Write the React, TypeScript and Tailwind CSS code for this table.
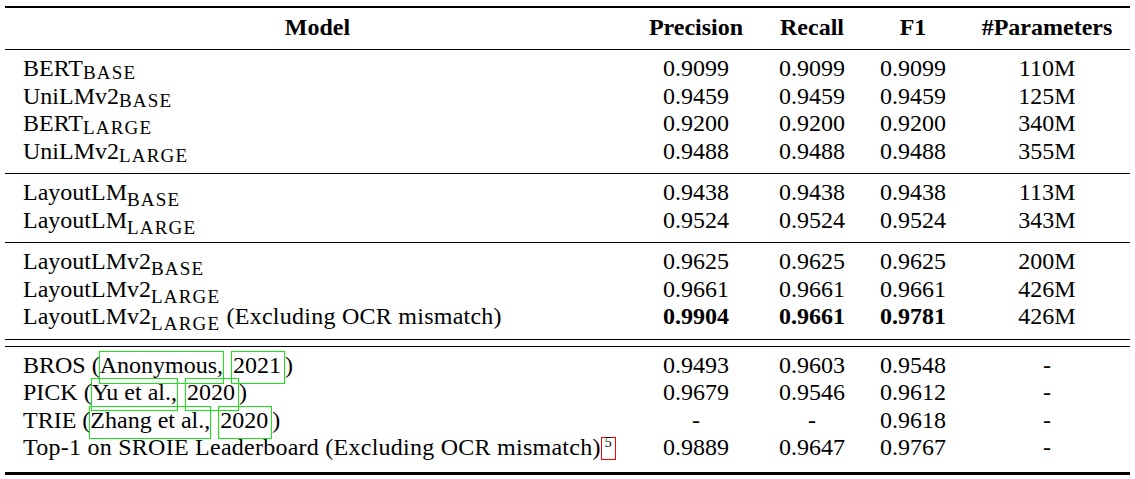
import React from "react";

type Cell = React.ReactNode;

const Sub = ({ children, lo }: { children: React.ReactNode; lo: boolean }) => (
  <span
    className={
      lo
        ? "relative top-[6px] text-[19px] leading-none tracking-[1.2px]"
        : "relative top-[3px] text-[19px] leading-none tracking-[1.2px]"
    }
  >
    {children}
  </span>
);

const Cite = ({ children }: { children: React.ReactNode }) => (
  <span className="-mx-[1px] border border-[#16e916] pt-0 pb-[5px]">{children}</span>
);

const Year = ({ children }: { children: React.ReactNode }) => (
  <span className="ml-[2px] pl-[1px] pr-[3px] border border-[#16e916] pt-0 pb-[5px]">{children}</span>
);

const Row = ({ cells }: { cells: Cell[] }) => (
  <div className="grid grid-cols-[625px_132px_100px_102px_166px] h-[27.5px]">
    <div className="pl-[18px] whitespace-nowrap">{cells[0]}</div>
    <div className="text-center">{cells[1]}</div>
    <div className="text-center">{cells[2]}</div>
    <div className="text-center">{cells[3]}</div>
    <div className="text-center">{cells[4]}</div>
  </div>
);

const B = ({ children }: { children: React.ReactNode }) => <span className="font-bold">{children}</span>;

export default function App() {
  return (
    <div
      className="w-[1135px] h-[479px] bg-white text-black pt-[6px]"
      style={{ fontFamily: '"Liberation Serif", "Times New Roman", serif' }}
    >
      <div className="ml-[5px] w-[1125px] text-[24px] leading-[27.5px]">
        {/* header */}
        <div className="border-t-2 border-b border-black h-[44px] pt-[6px] font-bold">
          <div className="grid grid-cols-[625px_132px_100px_102px_166px]">
            <div className="text-center">Model</div>
            <div className="text-center">Precision</div>
            <div className="text-center">Recall</div>
            <div className="text-center">F1</div>
            <div className="text-center">#Parameters</div>
          </div>
        </div>

        {/* block 1 */}
        <div className="border-b border-black pt-[5px] pb-[8px]">
          <Row cells={[<>BERT<Sub lo={false}>BASE</Sub></>, "0.9099", "0.9099", "0.9099", "110M"]} />
          <Row cells={[<>UniLMv2<Sub lo={false}>BASE</Sub></>, "0.9459", "0.9459", "0.9459", "125M"]} />
          <Row cells={[<>BERT<Sub lo={false}>LARGE</Sub></>, "0.9200", "0.9200", "0.9200", "340M"]} />
          <Row cells={[<>UniLMv2<Sub lo={false}>LARGE</Sub></>, "0.9488", "0.9488", "0.9488", "355M"]} />
        </div>

        {/* block 2 */}
        <div className="border-b border-black pt-[5px] pb-[8px]">
          <Row cells={[<>LayoutLM<Sub lo>BASE</Sub></>, "0.9438", "0.9438", "0.9438", "113M"]} />
          <Row cells={[<>LayoutLM<Sub lo>LARGE</Sub></>, "0.9524", "0.9524", "0.9524", "343M"]} />
        </div>

        {/* block 3 */}
        <div className="border-b border-black pt-[5px] pb-[8px]">
          <Row cells={[<>LayoutLMv2<Sub lo>BASE</Sub></>, "0.9625", "0.9625", "0.9625", "200M"]} />
          <Row cells={[<>LayoutLMv2<Sub lo>LARGE</Sub></>, "0.9661", "0.9661", "0.9661", "426M"]} />
          <Row
            cells={[
              <>
                LayoutLMv2<Sub lo>LARGE</Sub>
                <span className="tracking-[0.25px]"> (Excluding OCR mismatch)</span>
              </>,
              <B>0.9904</B>,
              <B>0.9661</B>,
              <B>0.9781</B>,
              "426M",
            ]}
          />
        </div>

        {/* block 4 */}
        <div className="mt-[6px] border-t border-b-[3px] border-black pt-[5px] pb-[10px]">
          <Row
            cells={[
              <>
                BROS (<Cite>Anonymous,</Cite> <Year>2021</Year>)
              </>,
              "0.9493",
              "0.9603",
              "0.9548",
              "-",
            ]}
          />
          <Row
            cells={[
              <>
                PICK (<Cite>Yu et al.,</Cite> <Year>2020</Year>)
              </>,
              "0.9679",
              "0.9546",
              "0.9612",
              "-",
            ]}
          />
          <Row
            cells={[
              <>
                TRIE (<Cite>Zhang et al.,</Cite> <Year>2020</Year>)
              </>,
              "-",
              "-",
              "0.9618",
              "-",
            ]}
          />
          <Row
            cells={[
              <>
                <span className="tracking-[0.25px]">Top-1 on SROIE Leaderboard (Excluding OCR mismatch)</span>
                <span className="relative top-[3px] inline-block align-top h-[23px] w-[15px] border border-[#ff0000] text-center text-[14px] leading-[10px] tracking-normal">
                  5
                </span>
              </>,
              "0.9889",
              "0.9647",
              "0.9767",
              "-",
            ]}
          />
        </div>
      </div>
    </div>
  );
}
